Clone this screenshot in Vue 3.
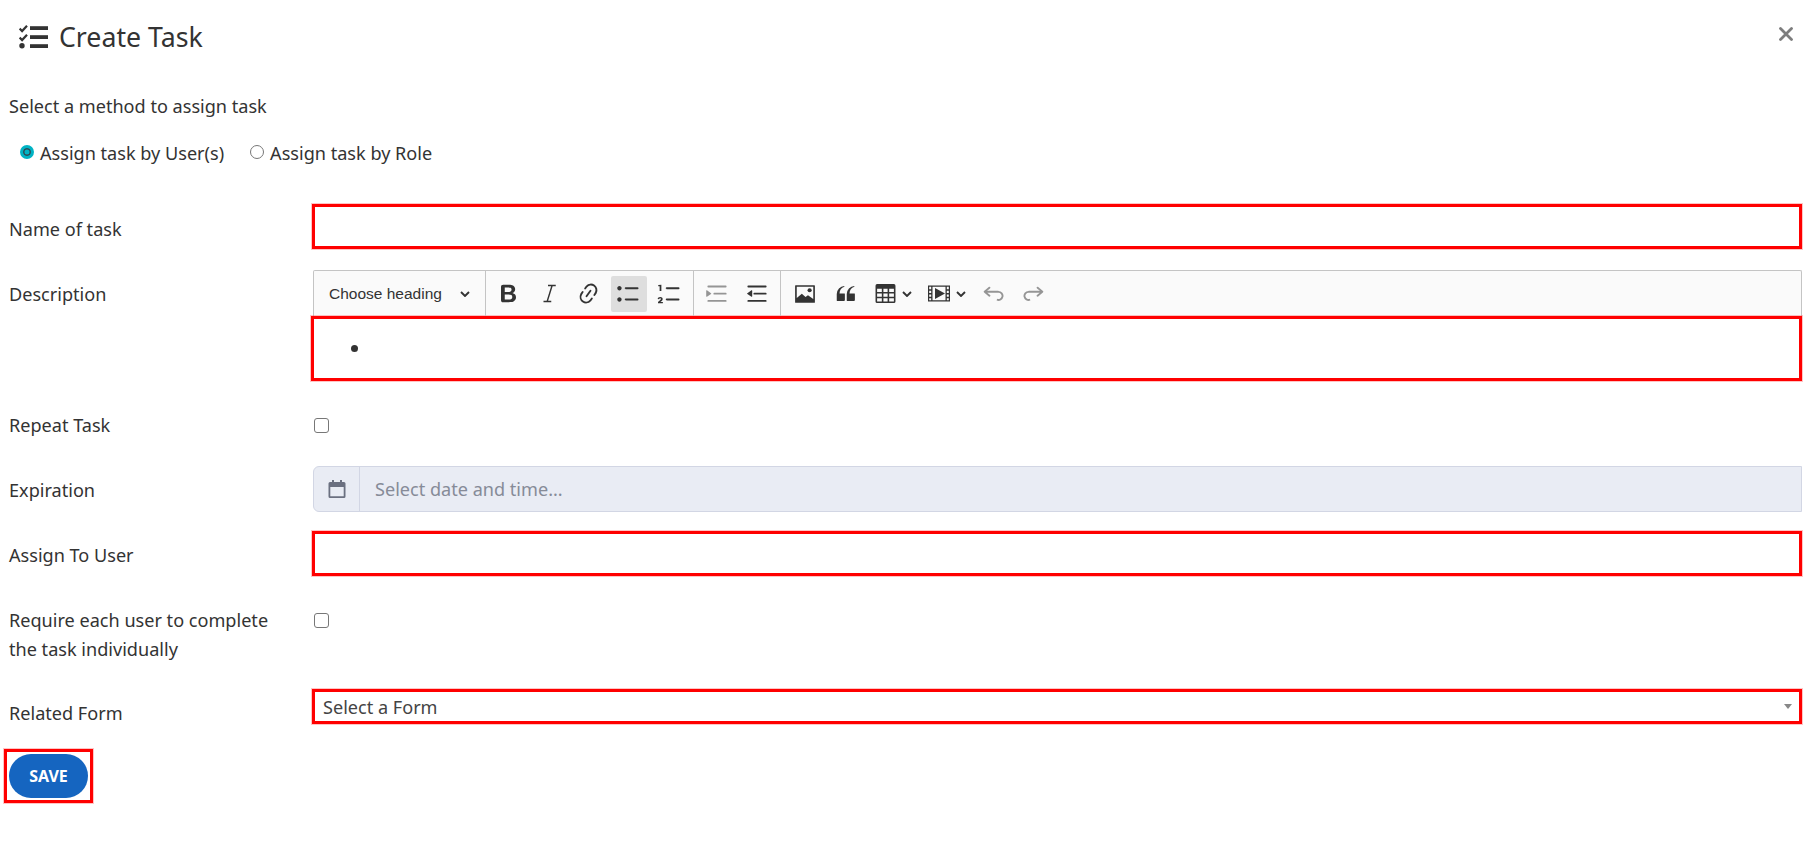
<template>
  <div class="page">
    <div class="head">
      <div class="title">
        <svg class="titleIcon" width="30" height="24" viewBox="0 0 30 24">
          <path d="M.6 3.600l2.500 2.500L8 .8M.6 12.600l2.500 2.500L8 9.800" fill="none" stroke="#333" stroke-width="2.200"/>
          <circle cx="3" cy="20.700" r="2.700" fill="#333"/>
          <rect x="11" y="1.200" width="18" height="3.800" fill="#333"/>
          <rect x="11" y="10.200" width="18" height="3.800" fill="#333"/>
          <rect x="11" y="19.200" width="18" height="3.800" fill="#333"/>
        </svg>
        <h1>Create Task</h1>
      </div>
      <svg class="close" width="14" height="14" viewBox="0 0 14 14">
        <path d="M1.500 1.500l11 11M12.500 1.500l-11 11" stroke="#7d7d7d" stroke-width="2.800" stroke-linecap="round"/>
      </svg>
    </div>

    <p class="method">Select a method to assign task</p>
    <div class="radios">
      <label class="radio"><input type="radio" name="method" value="user" v-model="method" />Assign task by User(s)</label>
      <label class="radio"><input type="radio" name="method" value="role" v-model="method" />Assign task by Role</label>
    </div>

    <div class="row rowName">
      <label>Name of task</label>
      <input class="redInput" type="text" />
    </div>

    <div class="row rowDesc">
      <label>Description</label>
      <div class="editor">
        <div class="toolbar">
          <div class="tbHeading">
            <span>Choose heading</span>
            <svg width="10" height="6" viewBox="0 0 10 6"><path d="M1 1l4 4 4-4" fill="none" stroke="#333" stroke-width="1.900"/></svg>
          </div>
          <div class="tbGroup first">
            <button v-for="b in group1" :key="b.name" :class="{ on: b.on }">
              <svg width="25" height="25" viewBox="0 0 20 20"><path :d="b.d" fill="#333"/></svg>
            </button>
          </div>
          <div class="tbGroup">
            <button v-for="b in group2" :key="b.name" :class="{ dim: b.dim }">
              <svg width="24" height="24" viewBox="0 0 20 20"><path :d="b.d" fill="#333"/></svg>
            </button>
          </div>
          <div class="tbGroup last">
            <button>
              <svg width="22" height="22" viewBox="0 0 20 20">
                <path fill-rule="evenodd" d="M1.500 2h17a.5.5 0 0 1 .5.5v15a.5.5 0 0 1-.5.5h-17a.5.5 0 0 1-.5-.5v-15a.5.5 0 0 1 .5-.5zM2.500 3.500v10.200l4.600-3.900 3.400 2.900 2.200-1.600 4.800 3.400V3.500z" fill="#333"/>
                <circle cx="14.200" cy="6.600" r="1.900" fill="#333"/>
              </svg>
            </button>
            <button>
              <svg width="25" height="25" viewBox="0 0 20 20"><path d="M3 10.423a6.5 6.5 0 0 1 6.056-6.408l.038.67C6.448 5.423 5.354 7.663 5.22 10H9c.552 0 .5.432.5.986v4.511c0 .554-.448.503-1 .503h-5c-.552 0-.5-.449-.5-1.003v-4.574zm8 0a6.5 6.5 0 0 1 6.056-6.408l.038.67c-2.646.739-3.74 2.979-3.873 5.315H17c.552 0 .5.432.5.986v4.511c0 .554-.448.503-1 .503h-5c-.552 0-.5-.449-.5-1.003v-4.574z" fill="#333"/></svg>
            </button>
            <button class="drop">
              <svg width="21" height="21" viewBox="0 0 20 20">
                <path fill-rule="evenodd" d="M2 1h16a1.500 1.500 0 0 1 1.500 1.500v15A1.500 1.500 0 0 1 18 19H2a1.500 1.500 0 0 1-1.500-1.500v-15A1.500 1.500 0 0 1 2 1zM2 5.500v3h4.500v-3zm6 0v3h4v-3zm5.500 0v3H18v-3zM2 10v3h4.500v-3zm6 0v3h4v-3zm5.500 0v3H18v-3zM2 14.500v3h4.500v-3zm6 0v3h4v-3zm5.500 0v3H18v-3z" fill="#333"/>
              </svg>
              <svg class="caret" width="10" height="6" viewBox="0 0 10 6"><path d="M1 1l4 4 4-4" fill="none" stroke="#333" stroke-width="1.900"/></svg>
            </button>
            <button class="drop video">
              <svg width="22" height="23" viewBox="0 0 22 20" preserveAspectRatio="none">
                <path fill-rule="evenodd" d="M0 3h22v14H0zM1.200 4.200v2h2v-2zm0 3.300v2h2v-2zm0 3.300v2h2v-2zm0 3.300v1.700h2v-1.700zM18.800 4.200v2h2v-2zm0 3.300v2h2v-2zm0 3.300v2h2v-2zm0 3.300v1.700h2v-1.700zM4.500 4.200v11.600h13V4.200z" fill="#333"/>
                <path d="M7 5.200l10 4.800-10 4.800z" fill="#333"/>
              </svg>
              <svg class="caret" width="10" height="6" viewBox="0 0 10 6"><path d="M1 1l4 4 4-4" fill="none" stroke="#333" stroke-width="1.900"/></svg>
            </button>
            <button class="dim">
              <svg width="25" height="25" viewBox="0 0 20 20"><path d="m5.042 9.367 2.189 1.837a.75.75 0 0 1-.965 1.149l-3.788-3.18a.747.747 0 0 1-.21-.284.75.75 0 0 1 .17-.945L6.23 4.762a.75.75 0 1 1 .964 1.15L4.863 7.866h8.917A.75.75 0 0 1 14 7.9a4 4 0 1 1-1.477 7.718l.344-1.489a2.5 2.5 0 1 0 1.094-4.73l.008-.032H5.042z" fill="#333"/></svg>
            </button>
            <button class="dim">
              <svg width="25" height="25" viewBox="0 0 20 20"><path d="m14.958 9.367-2.189 1.837a.75.75 0 0 0 .965 1.149l3.788-3.18a.747.747 0 0 0 .21-.284.75.75 0 0 0-.17-.945L13.770 4.762a.75.75 0 1 0-.964 1.150l2.331 1.955H6.220A.75.75 0 0 0 6 7.900a4 4 0 1 0 1.477 7.718l-.344-1.489A2.500 2.500 0 1 1 6.039 9.400l-.008-.032h8.927z" fill="#333"/></svg>
            </button>
          </div>
        </div>
        <div class="editArea"><ul><li></li></ul></div>
      </div>
    </div>

    <div class="row rowRepeat">
      <label>Repeat Task</label>
      <div><input class="check" type="checkbox" /></div>
    </div>

    <div class="row rowExp">
      <label>Expiration</label>
      <div class="dateBox">
        <span class="dateIcon">
          <svg width="18" height="20" viewBox="0 0 18 20">
            <path fill-rule="evenodd" d="M4 1h2v2h6V1h2v2h2a1.500 1.500 0 0 1 1.500 1.500v13A1.500 1.500 0 0 1 16 19H2a1.500 1.500 0 0 1-1.500-1.500v-13A1.500 1.500 0 0 1 2 3h2zM2.300 8v9.200h13.400V8z" fill="#6b7080"/>
          </svg>
        </span>
        <span class="datePh">Select date and time...</span>
      </div>
    </div>

    <div class="row rowAssign">
      <label>Assign To User</label>
      <input class="redInput" type="text" />
    </div>

    <div class="row rowRequire">
      <label>Require each user to complete the task individually</label>
      <div><input class="check" type="checkbox" /></div>
    </div>

    <div class="row rowForm">
      <label>Related Form</label>
      <div class="formSelect">
        <span>Select a Form</span>
        <i class="selArrow"></i>
      </div>
    </div>

    <div class="saveWrap"><button class="save">SAVE</button></div>
  </div>
</template>

<script setup>
import { ref } from 'vue'

const method = ref('user')

const group1 = [
  { name: 'bold', d: 'M10.187 17H5.773c-.637 0-1.092-.138-1.364-.415-.273-.277-.409-.718-.409-1.323V4.738c0-.617.14-1.062.419-1.332.279-.27.73-.406 1.354-.406h4.68c.69 0 1.288.041 1.793.124.506.083.96.242 1.36.478.341.197.644.447.906.75a3.262 3.262 0 0 1 .808 2.162c0 1.401-.722 2.426-2.167 3.075C15.05 10.175 16 11.315 16 13.01a3.756 3.756 0 0 1-2.296 3.504 6.1 6.1 0 0 1-1.517.377c-.571.073-1.238.11-2 .11zm-.217-6.217H7v4.087h3.069c1.977 0 2.965-.69 2.965-2.072 0-.707-.256-1.22-.768-1.537-.512-.319-1.277-.478-2.296-.478zM7 5.13v3.619h2.606c.729 0 1.292-.067 1.69-.2a1.6 1.6 0 0 0 .91-.765c.165-.267.247-.566.247-.897 0-.707-.26-1.176-.778-1.409-.519-.232-1.31-.348-2.375-.348H7z' },
  { name: 'italic', d: 'M9.600 3h6.200v1.200h-2.500L9.700 15.800h2.500V17H6v-1.200h2.500L12.100 4.200H9.600z' },
  { name: 'link', d: 'm11.077 15 .991-1.416a.75.75 0 1 1 1.229.86l-1.148 1.64a.748.748 0 0 1-.217.206 5.251 5.251 0 0 1-8.503-5.955.741.741 0 0 1 .12-.274l1.147-1.639a.75.75 0 1 1 1.228.86L4.933 10.700l.006.003a3.75 3.75 0 0 0 6.132 4.294l.006.004zm5.494-5.335a.748.748 0 0 1-.12.274l-1.147 1.639a.75.75 0 1 1-1.228-.86l.86-1.23a3.75 3.75 0 0 0-6.144-4.301l-.86 1.229a.75.75 0 0 1-1.229-.86l1.148-1.64a.748.748 0 0 1 .217-.206 5.251 5.251 0 0 1 8.503 5.955zm-4.563-2.532a.75.75 0 0 1 .184 1.045l-3.155 4.505a.75.75 0 1 1-1.229-.86l3.155-4.506a.75.75 0 0 1 1.045-.184z' },
  { name: 'bullets', on: true, d: 'M7 5.75c0 .414.336.75.75.75h9.5a.75.75 0 1 0 0-1.5h-9.5a.75.75 0 0 0-.75.75zm-6 0C1 4.784 1.777 4 2.75 4c.966 0 1.75.777 1.75 1.75 0 .966-.777 1.75-1.75 1.750C1.784 7.500 1 6.723 1 5.750zm6 9c0 .414.336.75.75.75h9.500a.75.75 0 1 0 0-1.500h-9.500a.75.75 0 0 0-.75.75zm-6 0c0-.966.777-1.750 1.750-1.750.966 0 1.750.777 1.750 1.750 0 .966-.777 1.750-1.750 1.750-.966 0-1.750-.777-1.750-1.750z' },
  { name: 'numbers', d: 'M7 5.750c0 .414.336.75.75.75h9.500a.75.75 0 1 0 0-1.500h-9.500a.75.75 0 0 0-.75.75zM3.500 3v5H2.100V4.100H1V3.200zM7 14.750c0 .414.336.75.75.75h9.500a.75.75 0 1 0 0-1.500h-9.500a.75.75 0 0 0-.75.75zM.8 17.800v-1l2-1.900c.5-.5.4-1.100-.2-1.100-.5 0-.8.300-.9.800l-1.200-.2c.1-1 .9-1.700 2.100-1.700 1.400 0 2.200.9 1.900 2-.1.500-.5.900-1 1.400l-.8.700h2v1z' },
]

const group2 = [
  { name: 'indent', dim: true, d: 'M2 3.75c0 .414.336.75.75.75h14.5a.75.75 0 1 0 0-1.5H2.75a.75.75 0 0 0-.75.75zm5 6c0 .414.336.75.75.75h9.5a.75.75 0 1 0 0-1.5h-9.5a.75.75 0 0 0-.75.75zM2.75 16.5h14.5a.75.75 0 1 0 0-1.5H2.75a.75.75 0 1 0 0 1.5zM1.632 6.95 5.02 9.358a.4.4 0 0 1-.013.661l-3.39 2.207A.4.4 0 0 1 1 11.892V7.275a.4.4 0 0 1 .632-.326z' },
  { name: 'outdent', d: 'M2 3.75c0 .414.336.75.75.75h14.5a.75.75 0 1 0 0-1.5H2.75a.75.75 0 0 0-.75.75zm5 6c0 .414.336.75.75.75h9.5a.75.75 0 1 0 0-1.5h-9.5a.75.75 0 0 0-.75.75zM2.75 16.5h14.5a.75.75 0 1 0 0-1.5H2.75a.75.75 0 1 0 0 1.5zM5.368 6.95 1.98 9.358a.4.4 0 0 0 .013.661l3.39 2.207A.4.4 0 0 0 6 11.892V7.275a.4.4 0 0 0-.632-.326z' },
]
</script>

<style scoped>
.page {
  box-sizing: border-box;
  width: 1811px;
  height: 853px;
  padding: 0 9px;
  background: #fff;
  font-family: "Noto Sans", "Open Sans", sans-serif;
  font-size: 18.1px;
  color: #333;
}
.head {
  box-sizing: border-box;
  display: flex;
  align-items: center;
  justify-content: space-between;
  height: 75px;
  padding: 0 9px 2px 10px;
}
.title {
  display: flex;
  align-items: center;
  gap: 10px;
}
.title h1 {
  margin: 0;
  font-size: 26.7px;
  font-weight: 400;
  color: #333;
}
.close {
  margin-top: -6px;
}
.method {
  margin: 19px 0 0;
  line-height: 24px;
}
.radios {
  display: flex;
  gap: 26px;
  margin-top: 23px;
  padding-left: 11px;
  height: 24px;
}
.radio {
  display: flex;
  align-items: center;
  gap: 6px;
}
.radio input {
  appearance: none;
  box-sizing: border-box;
  width: 14px;
  height: 14px;
  margin: 0 0 2px;
  border: 1px solid #777;
  border-radius: 50%;
  background: #fff;
}
.radio input:checked {
  border: 3px solid #00b3c4;
  background: #00b3c4;
  box-shadow: inset 0 0 0 1.5px #2e4b55;
}
.row {
  display: grid;
  grid-template-columns: 303px 1fr;
}
.row > label {
  line-height: 29px;
  padding-right: 30px;
}
.redInput {
  box-sizing: border-box;
  display: block;
  width: 100%;
  height: 45px;
  margin: 0;
  border: 3px solid #f00;
  box-shadow: 0 0 0 1px rgba(255, 60, 60, 0.3);
  background: #fff;
  outline: none;
}
.rowName {
  margin-top: 39px;
  align-items: center;
}
.rowName > label {
  padding-top: 6px;
}
.rowAssign > label {
  padding-top: 4px;
}
.rowExp > label {
  padding-top: 2px;
}
.rowDesc {
  margin-top: 21px;
}
.rowDesc > label {
  padding-top: 10px;
}
.editor {
  min-width: 0;
  padding-left: 1px;
}
.toolbar {
  box-sizing: border-box;
  display: flex;
  align-items: center;
  height: 46px;
  background: #fafafa;
  border: 1px solid #c4c4c4;
  border-bottom: none;
  border-radius: 2px 2px 0 0;
}
.tbHeading {
  display: flex;
  align-items: center;
  justify-content: space-between;
  box-sizing: border-box;
  width: 172px;
  height: 100%;
  padding: 0 15px;
  border-right: 1px solid #c4c4c4;
  font-family: "Liberation Sans", Arial, sans-serif;
  font-size: 15.5px;
  color: #333;
}
.tbGroup {
  display: flex;
  align-items: center;
  gap: 4.25px;
  height: 100%;
  padding: 0 5px;
  border-right: 1px solid #c4c4c4;
}
.tbGroup.first {
  padding: 0 6px 0 4px;
}
.tbGroup.last {
  gap: 4.5px;
  padding: 0 6px;
  border-right: none;
}
.tbGroup button {
  display: flex;
  align-items: center;
  justify-content: center;
  gap: 6px;
  width: 36px;
  height: 36px;
  padding: 0;
  border: none;
  border-radius: 2px;
  background: transparent;
}
.tbGroup button.on {
  background: #dedede;
}
.tbGroup button.dim svg {
  opacity: 0.5;
}
.tbGroup button.drop {
  width: 50px;
}
.tbGroup button.drop.video {
  width: 48px;
}
.editArea {
  box-sizing: border-box;
  height: 65px;
  margin-left: -2px;
  border: 3px solid #f00;
  box-shadow: 0 0 0 1px rgba(255, 60, 60, 0.3);
  background: #fff;
}
.editArea ul {
  margin: 0;
  padding: 17px 0 0 58px;
  font-size: 20px;
  line-height: 26px;
}
.rowRepeat {
  margin-top: 30px;
  height: 29px;
}
.rowRepeat > div {
  padding: 7px 0 0 2px;
}
.rowRequire > div {
  padding: 7px 0 0 2px;
}
.check {
  appearance: none;
  display: block;
  box-sizing: border-box;
  width: 15px;
  height: 15px;
  margin: 0;
  border: 1px solid #777;
  border-radius: 3px;
  background: #fff;
}
.rowExp {
  margin-top: 26px;
  align-items: center;
}
.dateBox {
  box-sizing: border-box;
  display: flex;
  align-items: center;
  height: 46px;
  margin-left: 1px;
  background: #e9ecf4;
  border: 1px solid #d2d6e4;
  border-radius: 6px 0 0 6px;
}
.dateIcon {
  display: flex;
  align-items: center;
  justify-content: center;
  width: 45px;
  height: 100%;
  border-right: 1px solid #d2d6e4;
}
.datePh {
  padding-left: 15px;
  color: #868b98;
}
.rowAssign {
  margin-top: 19px;
  align-items: center;
}
.rowRequire {
  margin-top: 30px;
}
.rowForm {
  margin-top: 25px;
  align-items: start;
}
.rowForm > label {
  padding-top: 10px;
}
.formSelect {
  box-sizing: border-box;
  display: flex;
  align-items: center;
  justify-content: space-between;
  height: 35px;
  padding: 0 7px 0 8px;
  border: 3px solid #f00;
  box-shadow: 0 0 0 1px rgba(255, 60, 60, 0.3);
  color: #444;
}
.selArrow {
  width: 0;
  height: 0;
  border-left: 4px solid transparent;
  border-right: 4px solid transparent;
  border-top: 5px solid #888;
}
.saveWrap {
  box-sizing: border-box;
  display: flex;
  width: 89px;
  height: 54px;
  margin: 21px 0 0 -5px;
  padding: 2px;
  border: 3px solid #f00;
  box-shadow: 0 0 0 1px rgba(255, 60, 60, 0.3);
}
.save {
  width: 79px;
  height: 44px;
  padding: 0;
  border: none;
  border-radius: 22px;
  background: #1565c0;
  color: #fff;
  font-family: "Noto Sans", sans-serif;
  font-size: 16px;
  font-weight: 700;
}
</style>

<style>
html, body {
  margin: 0;
  background: #fff;
}
</style>
